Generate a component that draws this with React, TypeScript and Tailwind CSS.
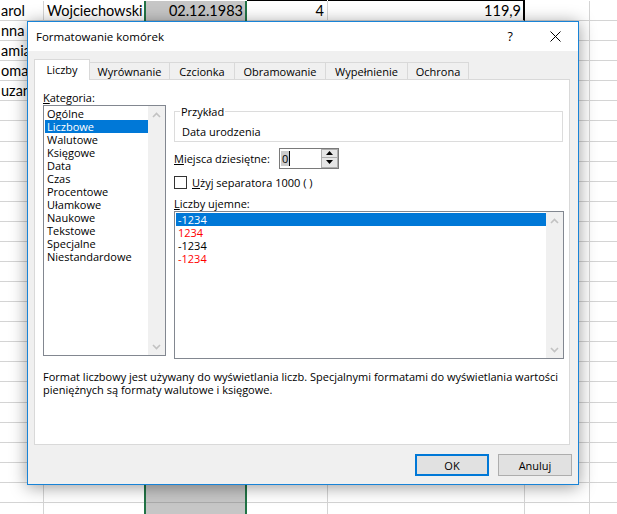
import React from "react";

function SheetRow({ i }: { i: number }) {
  const first = i === 0;
  const leftText = ["arol", "nna", "amia", "omas", "uzann"][i];
  const h = first ? "h-[21.08px] border-t border-t-transparent" : "h-[20.08px]";
  return (
    <div className={`flex shrink-0 ${h}`}>
      <div className="w-[44px] shrink-0 border-r border-b border-[#d4d4d4] flex items-center overflow-hidden whitespace-nowrap pl-[1px]">
        {leftText ?? ""}
      </div>
      <div className="w-[100px] shrink-0 border-b border-[#d4d4d4] flex items-center pl-[3px] whitespace-nowrap overflow-hidden">
        {first ? "Wojciechowski" : ""}
      </div>
      <div className="w-[103px] shrink-0 border-l-2 border-r-2 border-l-[#217346] border-r-[#217346] bg-[#c6c6c6] flex items-center justify-end pr-[2px] relative">
        <div className="absolute left-0 right-0 bottom-0 h-[1px] bg-[#ababab]" />
        {first ? "02.12.1983" : ""}
      </div>
      <div className="w-[81px] shrink-0 border-r border-b border-[#d4d4d4] flex items-center justify-end pr-[3px] relative">
        {first && <div className="absolute left-0 right-0 top-[-1px] h-[1px] bg-black" />}
        {first ? "4" : ""}
      </div>
      <div
        className={`w-[197px] shrink-0 border-b border-[#d4d4d4] ${
          first ? "border-r-2 border-r-black" : "border-r border-r-[#d4d4d4]"
        } flex items-center justify-end pr-[2px] relative`}
      >
        {first && <div className="absolute left-0 right-[-2px] top-[-1px] h-[1px] bg-black" />}
        {first ? "119,9" : ""}
      </div>
      <div className="w-[65px] shrink-0 border-r border-b border-[#d4d4d4]" />
      <div className="w-[60px] shrink-0 border-r border-b border-[#d4d4d4]" />
    </div>
  );
}

function ChevronUp() {
  return (
    <svg width="9" height="6" viewBox="0 0 9 6">
      <path d="M1 5 L4.5 1.5 L8 5" fill="none" stroke="#c2c2c2" strokeWidth="1.6" />
    </svg>
  );
}
function ChevronDown() {
  return (
    <svg width="9" height="6" viewBox="0 0 9 6">
      <path d="M1 1 L4.5 4.5 L8 1" fill="none" stroke="#c2c2c2" strokeWidth="1.6" />
    </svg>
  );
}

function ScrollBar() {
  return (
    <div className="w-[17px] h-full bg-[#f0f0f0] flex flex-col justify-between shrink-0">
      <div className="h-[17px] flex items-center justify-center">
        <ChevronUp />
      </div>
      <div className="h-[17px] flex items-center justify-center">
        <ChevronDown />
      </div>
    </div>
  );
}

const categories = [
  "Ogólne",
  "Liczbowe",
  "Walutowe",
  "Księgowe",
  "Data",
  "Czas",
  "Procentowe",
  "Ułamkowe",
  "Naukowe",
  "Tekstowe",
  "Specjalne",
  "Niestandardowe",
];

const negatives: { t: string; red: boolean }[] = [
  { t: "-1234", red: false },
  { t: "1234", red: true },
  { t: "-1234", red: false },
  { t: "-1234", red: true },
];

function Dialog() {
  const tabs = ["Wyrównanie", "Czcionka", "Obramowanie", "Wypełnienie", "Ochrona"];
  const tabW = ["w-[80px]", "w-[65px]", "w-[91px]", "w-[82px]", "w-[61px]"];
  return (
    <div className="absolute left-[27px] top-[21px] w-[552px] h-[464px] border border-[#1883d7] bg-[#f0f0f0] shadow-[0_2px_16px_rgba(0,0,0,0.4)] font-['Open_Sans',sans-serif] text-[11px] leading-[13px] text-black flex flex-col">
      {/* title bar */}
      <div className="h-[29px] shrink-0 bg-white flex items-center">
        <span className="ml-[8px] text-[11.5px]">Formatowanie komórek</span>
        <span className="ml-auto text-[12.5px]">?</span>
        <svg className="ml-[37px] mr-[17px]" width="11" height="11" viewBox="0 0 11 11">
          <path d="M0.5 0.5 L10.5 10.5 M10.5 0.5 L0.5 10.5" stroke="#000" strokeWidth="1" />
        </svg>
      </div>
      {/* body */}
      <div className="px-[6px] pt-[8px] flex flex-col">
        <div className="flex items-end h-[21px] -mb-[1px] relative z-10">
          <div className="w-[56px] h-[21px] bg-white border-l border-t border-r border-[#d9d9d9] flex items-center justify-center pb-[1px]">
            Liczby
          </div>
          {tabs.map((t, k) => (
            <div
              key={t}
              className={`${tabW[k]} h-[18px] bg-[#f0f0f0] border-t border-r border-b border-[#d9d9d9] flex items-center justify-center`}
            >
              {t}
            </div>
          ))}
        </div>
        <div className="w-[536px] h-[366px] border border-[#d9d9d9] bg-white pl-[8px] pt-[10px] flex flex-col">
          <div className="h-[15px] leading-[15px]">
            <span className="underline">K</span>ategoria:
          </div>
          <div className="flex">
            {/* category list */}
            <div className="w-[123px] h-[251px] border border-[#828790] bg-white flex shrink-0">
              <div className="flex-1 pl-[1px] pt-[1px] flex flex-col">
                {categories.map((c) => (
                  <div
                    key={c}
                    className={`h-[13px] leading-[13px] pl-[2px] whitespace-nowrap ${
                      c === "Liczbowe" ? "bg-[#0078d7] text-white" : ""
                    }`}
                  >
                    {c}
                  </div>
                ))}
              </div>
              <ScrollBar />
            </div>
            {/* right column */}
            <div className="ml-[8px] w-[390px] flex flex-col">
              <fieldset className="border border-[#dcdcdc] pl-[5px] pb-[3px] mr-[1px]">
                <legend className="px-[1px] leading-[13px]">Przykład</legend>
                <div className="pt-[7px] pl-[2px]">Data urodzenia</div>
              </fieldset>
              <div className="mt-[6px] h-[20px] flex items-center">
                <div className="w-[105px] whitespace-nowrap">
                  <span className="underline">M</span>iejsca dziesiętne:
                </div>
                <div className="w-[60px] h-[21px] border border-[#7a7a7a] bg-white flex">
                  <div className="flex-1 flex items-center pl-[1px]">
                    <span className="bg-[#cccccc] h-[15px] leading-[15px] px-[1px] border-r border-black">0</span>
                  </div>
                  <div className="w-[17px] flex flex-col">
                    <div className="h-[9.5px] bg-[#e5e5e5] border border-[#adadad] flex items-center justify-center">
                      <svg width="7" height="4" viewBox="0 0 7 4">
                        <path d="M0 4 L3.5 0 L7 4 Z" fill="#000" />
                      </svg>
                    </div>
                    <div className="h-[9.5px] bg-[#e5e5e5] border border-t-0 border-[#adadad] flex items-center justify-center">
                      <svg width="7" height="4" viewBox="0 0 7 4">
                        <path d="M0 0 L3.5 4 L7 0 Z" fill="#000" />
                      </svg>
                    </div>
                  </div>
                </div>
              </div>
              <div className="mt-[8px] h-[13px] flex items-center">
                <div className="w-[13px] h-[13px] border border-[#333333] bg-white shrink-0" />
                <span className="ml-[5px] whitespace-nowrap">
                  <span className="underline">U</span>żyj separatora 1000 ( )
                </span>
              </div>
              <div className="mt-[7px] h-[15px] leading-[15px]">
                <span className="underline">L</span>iczby ujemne:
              </div>
              <div className="h-[148px] border border-[#828790] bg-white flex">
                <div className="flex-1 pl-[1px] pt-[1px] flex flex-col">
                  {negatives.map((n, k) => (
                    <div
                      key={k}
                      className={`h-[13px] leading-[13px] pl-[2px] ${
                        k === 0 ? "bg-[#0078d7] text-white" : n.red ? "text-[#ff0000]" : ""
                      }`}
                    >
                      {n.t}
                    </div>
                  ))}
                </div>
                <ScrollBar />
              </div>
            </div>
          </div>
          <div className="mt-[11px] leading-[13px] whitespace-nowrap">
            Format liczbowy jest używany do wyświetlania liczb. Specjalnymi formatami do wyświetlania wartości
            <br />
            pieniężnych są formaty walutowe i księgowe.
          </div>
        </div>
        <div className="mt-[9px] flex justify-end gap-[9px]">
          <div className="w-[74px] h-[22px] border-2 border-[#0078d7] bg-[#e1e1e1] flex items-center justify-center">
            OK
          </div>
          <div className="w-[74px] h-[22px] border border-[#adadad] bg-[#e1e1e1] flex items-center justify-center">
            Anuluj
          </div>
        </div>
      </div>
    </div>
  );
}

export default function App() {
  const rows = Array.from({ length: 26 });
  return (
    <div className="relative w-[617px] h-[514px] overflow-hidden bg-white">
      <div className="flex flex-col font-['Lato',sans-serif] text-[14.5px] text-black">
        {rows.map((_, i) => (
          <SheetRow key={i} i={i} />
        ))}
      </div>
      <Dialog />
    </div>
  );
}
